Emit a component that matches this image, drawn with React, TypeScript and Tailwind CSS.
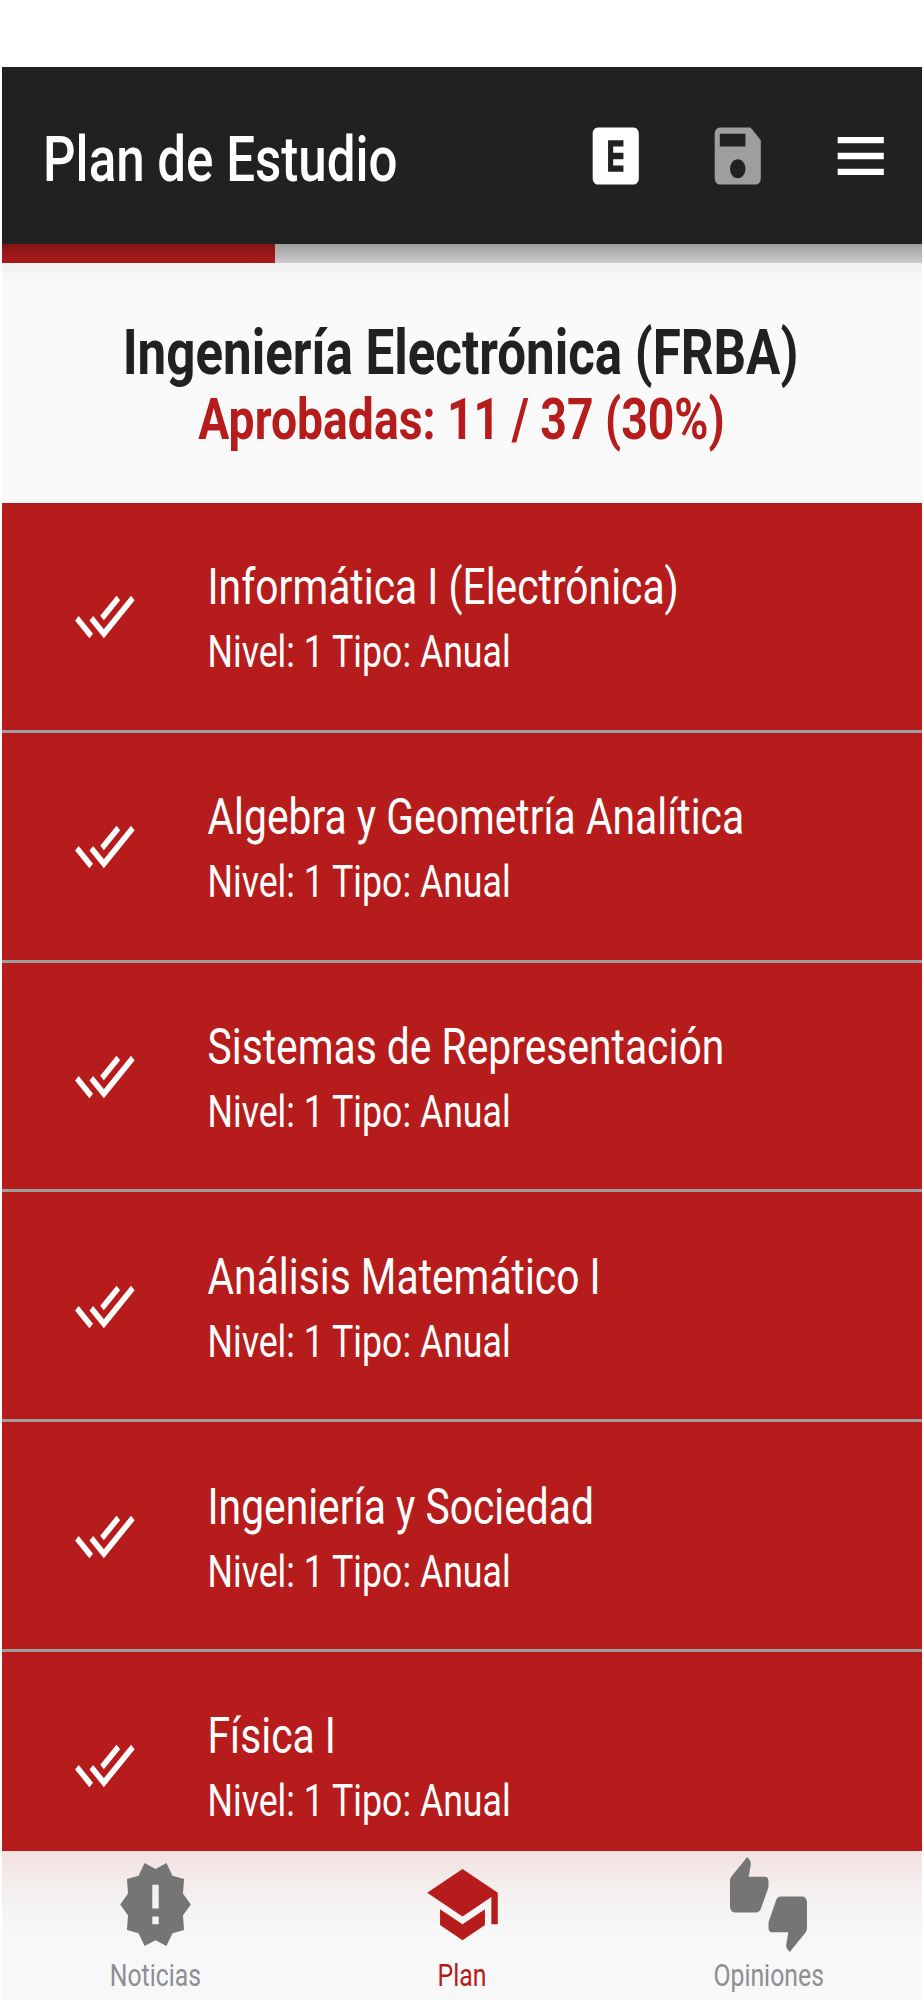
import React from 'react';
import type { IconType } from 'react-icons';
import {
  MdDoneAll,
  MdExplicit,
  MdMenu,
  MdNewReleases,
  MdSave,
  MdSchool,
  MdThumbsUpDown,
} from 'react-icons/md';

interface Subject {
  name: string;
  level: number;
  type: string;
}

interface Tab {
  label: string;
  icon: IconType;
  active?: boolean;
}

const subjects: Subject[] = [
  { name: 'Informática I (Electrónica)', level: 1, type: 'Anual' },
  { name: 'Algebra y Geometría Analítica', level: 1, type: 'Anual' },
  { name: 'Sistemas de Representación', level: 1, type: 'Anual' },
  { name: 'Análisis Matemático I', level: 1, type: 'Anual' },
  { name: 'Ingeniería y Sociedad', level: 1, type: 'Anual' },
  { name: 'Física I', level: 1, type: 'Anual' },
];

const tabs: Tab[] = [
  { label: 'Noticias', icon: MdNewReleases },
  { label: 'Plan', icon: MdSchool, active: true },
  { label: 'Opiniones', icon: MdThumbsUpDown },
];

const approved = 11;
const total = 37;

const Header: React.FC = () => (
  <header className="flex h-[177px] shrink-0 items-center bg-[#212121] pl-[41px] pr-[31px] text-white">
    <h1 className="flex-1 scale-y-[1.227] whitespace-nowrap pt-[6px] text-[51.1px] font-medium leading-[60px]">
      Plan de Estudio
    </h1>
    <div className="flex items-center gap-[61px] pt-px">
      <button>
        <MdExplicit preserveAspectRatio="none" className="h-[76px] w-[61.5px]" />
      </button>
      <button disabled>
        <MdSave preserveAspectRatio="none" className="h-[76px] w-[61.5px] text-[#9e9e9e]" />
      </button>
      <button>
        <MdMenu preserveAspectRatio="none" className="h-[76px] w-[61.5px]" />
      </button>
    </div>
  </header>
);

const ProgressBar: React.FC = () => (
  <div className="flex h-[19px] shrink-0 bg-linear-to-b from-[#9e9e9e] to-[#cbcbcb]">
    <div
      className="bg-linear-to-b from-[#841515] to-[#ac1a1a]"
      style={{ width: `${(approved / total) * 100 - 0.05}%` }}
    />
  </div>
);

const Summary: React.FC = () => (
  <section className="flex h-[240px] shrink-0 flex-col items-center bg-linear-to-b from-[#f1f1f1] to-[#fafafa] to-10% pr-[3px] pt-[57px] font-bold">
    <h2 className="scale-y-[1.227] whitespace-nowrap text-[51.1px] leading-[66px] text-[#212121]">
      Ingeniería Electrónica (FRBA)
    </h2>
    <p className="scale-y-[1.227] whitespace-nowrap pl-[2px] text-[46.3px] leading-[67px] text-[#b71c1c]">
      Aprobadas: {approved} / {total} ({Math.round((approved / total) * 100)}%)
    </p>
  </section>
);

const SubjectRow: React.FC<{ subject: Subject }> = ({ subject }) => (
  <li className="flex h-[229.8px] shrink-0 items-center border-b-[3px] border-[#9e9e9e] pl-[72px] text-white">
    <MdDoneAll preserveAspectRatio="none" className="h-[76px] w-[61.5px]" />
    <div className="ml-[72px] flex flex-col items-start whitespace-nowrap pt-[6px]">
      <span className="scale-y-[1.235] text-[40.8px] leading-[66px]">{subject.name}</span>
      <span className="scale-y-[1.235] text-[35.7px] leading-[64px]">
        Nivel: {subject.level} Tipo: {subject.type}
      </span>
    </div>
  </li>
);

const BottomNav: React.FC = () => (
  <nav className="flex h-[149px] shrink-0 bg-linear-to-b from-[#f2e2e1] via-[#f5f3f2] via-35% to-[#f8f8f8] to-60%">
    {tabs.map(({ label, icon: Icon, active }) => (
      <button
        key={label}
        className={`flex flex-1 flex-col items-center pt-[6px] ${active ? 'text-[#b71c1c]' : 'text-[#757575]'}`}
      >
        <Icon preserveAspectRatio="none" className="h-[95px] w-[77px] shrink-0" />
        <span
          className={`scale-y-[1.27] text-[24.8px] leading-[48px] ${active ? 'text-[#b71c1c]' : 'text-[#8e8e93]'}`}
        >
          {label}
        </span>
      </button>
    ))}
  </nav>
);

const App: React.FC = () => {
  return (
    <div className="flex h-[2000px] w-[924px] flex-col bg-white pl-[2px] pr-[2px] pt-[67px] font-['Roboto',sans-serif]">
      <Header />
      <ProgressBar />
      <Summary />
      <ul className="flex min-h-0 flex-1 flex-col overflow-hidden bg-[#b71c1c]">
        {subjects.map((subject) => (
          <SubjectRow key={subject.name} subject={subject} />
        ))}
      </ul>
      <BottomNav />
    </div>
  );
};

export default App;
